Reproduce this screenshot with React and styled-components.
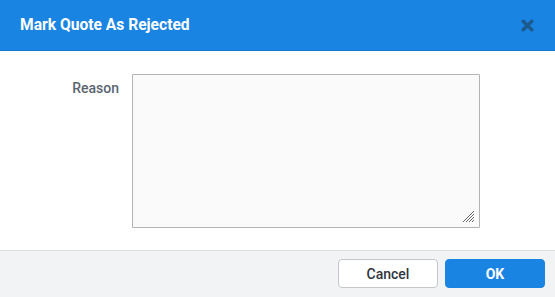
import React from "react";
import styled, { createGlobalStyle } from "styled-components";

const Global = createGlobalStyle`
  html, body { margin: 0; padding: 0; background: #fff; }
  body { font-family: Roboto, "Noto Sans", Arial, sans-serif; }
  * { box-sizing: border-box; }
`;

const Dialog = styled.div`
  width: 555px;
  height: 297px;
  display: flex;
  flex-direction: column;
  background: #fff;
  overflow: hidden;
`;

const Header = styled.div`
  height: 51px;
  flex: none;
  background: #1a84e2;
  border-bottom: 1px solid #1677cc;
  display: flex;
  align-items: center;
  justify-content: space-between;
  padding: 0 21px 0 20px;
`;

const Title = styled.h1`
  margin: 0;
  font-family: Roboto, Arial, sans-serif;
  font-weight: 700;
  font-size: 15.6px;
  color: #fff;
`;

const Close = styled.button`
  border: 0;
  background: none;
  padding: 0;
  width: 14px;
  height: 14px;
  display: flex;
  align-items: center;
  justify-content: center;
  cursor: pointer;
`;

const Body = styled.div`
  flex: 1;
  padding: 23px 0 0 0;
`;

const FieldRow = styled.div`
  display: grid;
  grid-template-columns: 119px 348px;
  column-gap: 13px;
  align-items: start;
`;

const Label = styled.label`
  text-align: right;
  font-family: Roboto, Arial, sans-serif;
  font-weight: 500;
  font-size: 14px;
  color: #5a6570;
  padding-top: 6px;
`;

const AreaWrap = styled.div`
  position: relative;
  width: 348px;
  height: 154px;
`;

const TextArea = styled.textarea`
  width: 100%;
  height: 100%;
  border: 1px solid #b3b3b3;
  border-radius: 1px;
  background: #fafafa;
  resize: none;
  font-family: Roboto, Arial, sans-serif;
  font-size: 13px;
  padding: 6px;
  outline: none;
  margin: 0;
  display: block;
`;

const Grip = styled.svg`
  position: absolute;
  right: 5px;
  bottom: 5px;
  pointer-events: none;
`;

const Footer = styled.div`
  height: 47px;
  flex: none;
  background: #f2f3f5;
  border-top: 1px solid #dcdde0;
  display: flex;
  justify-content: flex-end;
  align-items: flex-start;
  gap: 7px;
  padding: 8px 10px 0 0;
`;

const Button = styled.button`
  width: 100px;
  height: 29px;
  border-radius: 4px;
  font-family: Roboto, Arial, sans-serif;
  font-weight: ${(p) => (p.$primary ? 700 : 500)};
  font-size: 14px;
  cursor: pointer;
  border: 1px solid ${(p) => (p.$primary ? "#1a84e2" : "#c4c6ca")};
  background: ${(p) => (p.$primary ? "#1a84e2" : "#fff")};
  color: ${(p) => (p.$primary ? "#fff" : "#2f3540")};
`;

export default function App() {
  return (
    <>
      <Global />
      <Dialog>
        <Header>
          <Title>Mark Quote As Rejected</Title>
          <Close aria-label="Close">
            <svg width="13" height="13" viewBox="0 0 13 13">
              <path d="M2.2 2.2 L10.8 10.8 M10.8 2.2 L2.2 10.8" stroke="#1c5a8e" strokeWidth="3.4" strokeLinecap="round" />
            </svg>
          </Close>
        </Header>
        <Body>
          <FieldRow>
            <Label htmlFor="reason">Reason</Label>
            <AreaWrap>
              <TextArea id="reason" />
              <Grip width="13" height="13" viewBox="0 0 13 13">
                <path d="M1 12 L12 1 M4 12 L12 4 M7 12 L12 7 M10 12 L12 10" stroke="#666" strokeWidth="1" />
              </Grip>
            </AreaWrap>
          </FieldRow>
        </Body>
        <Footer>
          <Button>Cancel</Button>
          <Button $primary>OK</Button>
        </Footer>
      </Dialog>
    </>
  );
}
